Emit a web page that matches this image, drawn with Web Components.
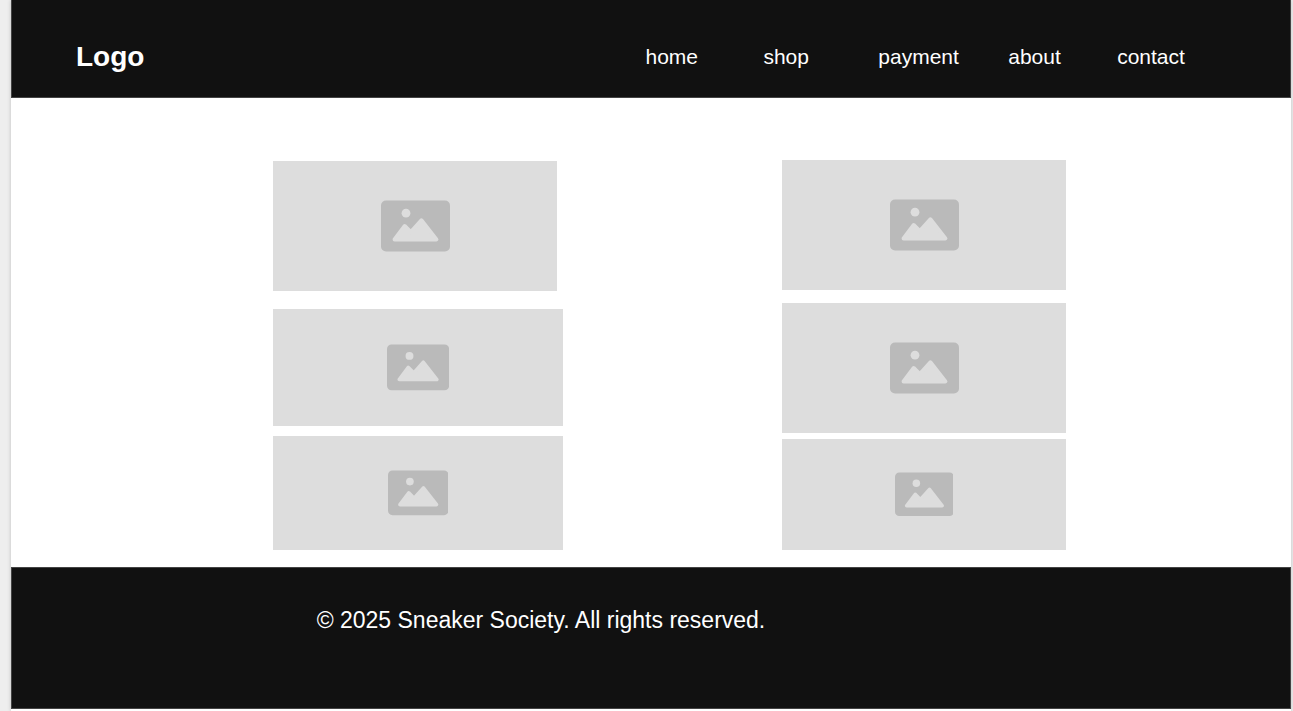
<!DOCTYPE html>
<html lang="en">
<head>
<meta charset="utf-8">
<meta name="viewport" content="width=device-width, initial-scale=1">
<title>Sneaker Society</title>
<style>
  body { margin: 0; background: #eee; font-family: "Liberation Sans", Arial, sans-serif; }
</style>
</head>
<body>
<shop-page>
  <site-header slot="header"></site-header>
  <photo-gallery>
    <photo-column slot="left">
      <photo-card style="--height:130px; --width:98%; --after:18px"></photo-card>
      <photo-card style="--height:117px; --after:10px"></photo-card>
      <photo-card style="--height:114px"></photo-card>
    </photo-column>
    <photo-column slot="right">
      <photo-card style="--height:130px; --after:13px"></photo-card>
      <photo-card style="--height:130px; --after:6px"></photo-card>
      <photo-card style="--height:111px"></photo-card>
    </photo-column>
  </photo-gallery>
  <site-footer slot="footer">© 2025 Sneaker Society. All rights reserved.</site-footer>
</shop-page>

<script>
const define = (name, html) => {
  const template = document.createElement('template');
  template.innerHTML = html;
  customElements.define(name, class extends HTMLElement {
    constructor() {
      super();
      this.attachShadow({ mode: 'open' }).append(template.content.cloneNode(true));
    }
  });
};

define('shop-page', `
  <style>
    :host { display: block; box-sizing: border-box; min-height: 100vh; margin: 0 2px 0 11px;
      background: #fff; box-shadow: 0 0 4px rgba(0,0,0,.2); }
  </style>
  <slot name="header"></slot>
  <main><slot></slot></main>
  <slot name="footer"></slot>`);

define('site-header', `
  <style>
    :host { display: block; }
    header { display: grid; grid-template-columns: 570fr 118fr 115fr 130fr 109fr 173fr;
      align-items: center; box-sizing: border-box; height: 98px; padding: 17px 0 0 5%;
      background: #111; border: 1px solid #444; border-top: 0; color: #fff; }
    nav { display: contents; }
    a { color: inherit; text-decoration: none; font-size: 21px; line-height: 24px; justify-self: start; }
    .logo { font-size: 28px; line-height: 32px; font-weight: 700; }
  </style>
  <header>
    <a class="logo" href="#">Logo</a>
    <nav aria-label="Main">
      <a href="#home">home</a>
      <a href="#shop">shop</a>
      <a href="#payment">payment</a>
      <a href="#about">about</a>
      <a href="#contact">contact</a>
    </nav>
  </header>`);

define('photo-gallery', `
  <style>
    :host { display: grid; grid-template-columns: 262fr 290fr 219fr 284fr 225fr;
      align-items: end; padding: 62px 0 17px; }
    slot[name=left]::slotted(*) { grid-column: 2; }
    slot[name=right]::slotted(*) { grid-column: 4; }
  </style>
  <slot name="left"></slot>
  <slot name="right"></slot>`);

define('photo-column', `
  <style>
    :host { display: flex; flex-direction: column; }
  </style>
  <slot></slot>`);

define('photo-card', `
  <style>
    :host { display: flex; align-items: center; justify-content: center;
      width: var(--width, 100%); height: var(--height); margin-bottom: var(--after, 0);
      background: #ddd; }
    svg { display: block; height: 40%; aspect-ratio: 69 / 52; }
  </style>
  <svg viewBox="0 0 69 52" role="img" aria-label="Image placeholder">
    <rect y="0.5" width="69" height="51" rx="5" fill="#bababa"/>
    <circle cx="25" cy="13.2" r="4.4" fill="#ddd"/>
    <path d="M13.6 39.5 23.7 26 29.8 32.2 40.4 20.3 55.4 39.5Z" fill="#ddd" stroke="#ddd" stroke-width="4" stroke-linejoin="round"/>
  </svg>`);

define('site-footer', `
  <style>
    :host { display: block; }
    footer { box-sizing: border-box; min-height: 142px; padding: 39px 24px 40px 23.8%;
      background: #111; border: 1px solid #444; color: #fff; font-size: 23px; line-height: 26px; }
    p { margin: 0; }
  </style>
  <footer><p><slot></slot></p></footer>`);
</script>
</body>
</html>
